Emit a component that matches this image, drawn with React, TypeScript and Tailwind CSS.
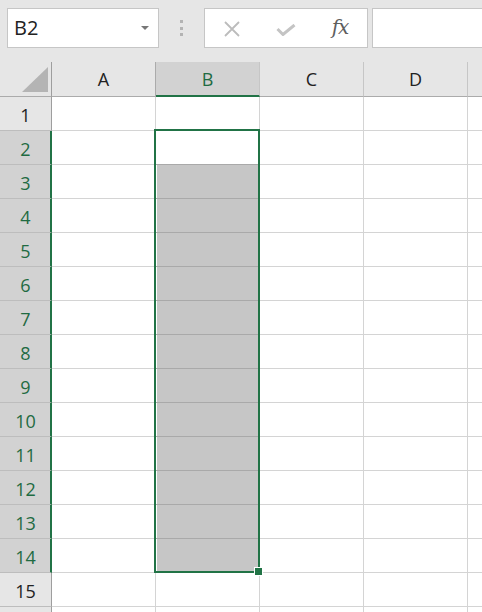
const GREEN = '#217346';

function XIcon() {
  return (
    <svg width="16" height="16" viewBox="0 0 16 16" fill="none">
      <path d="M1 1 L15 15 M15 1 L1 15" stroke="#bcbcbc" strokeWidth="1.8" />
    </svg>
  );
}

function CheckIcon() {
  return (
    <svg width="20" height="12" viewBox="0 0 20 12" fill="none">
      <path d="M1.5 5 L7 10.5 L18.5 1" stroke="#c4c4c4" strokeWidth="3" strokeLinejoin="miter" />
    </svg>
  );
}

export default function App() {
  const cols = ['A', 'B', 'C', 'D', 'E'];
  const rows = Array.from({ length: 16 }, (_, i) => i + 1);
  return (
    <div className="w-[482px] h-[612px] overflow-hidden bg-white font-['Open_Sans',sans-serif] text-[#262626]">
      {/* Formula bar */}
      <div className="h-[62px] bg-[#e6e6e6] flex items-start pt-[8px]">
        <div className="ml-[7px] w-[152px] h-[40px] border border-[#c6c6c6] bg-white flex items-center justify-between pl-[6px] pr-[9px]">
          <span className="text-[20px] leading-none text-[#222]">B2</span>
          <svg width="8" height="4" viewBox="0 0 8 4">
            <path d="M0 0 L8 0 L4 4 Z" fill="#777" />
          </svg>
        </div>
        <div className="w-[45px] h-[40px] flex flex-col items-center justify-center gap-[3.5px]">
          <div className="w-[3px] h-[3px] bg-[#b3b3b3]" />
          <div className="w-[3px] h-[3px] bg-[#b3b3b3]" />
          <div className="w-[3px] h-[3px] bg-[#b3b3b3]" />
        </div>
        <div className="w-[164px] h-[40px] border border-[#c6c6c6] bg-white flex items-center">
          <div className="w-[54px] flex justify-center pt-[1px]">
            <XIcon />
          </div>
          <div className="w-[54px] flex justify-center pt-[3px]">
            <CheckIcon />
          </div>
          <div className="w-[54px] flex justify-center">
            <span className="font-['DejaVu_Serif',serif] italic text-[20px] leading-none text-[#5e5e5e] pb-[2px] tracking-[-1px]">
              fx
            </span>
          </div>
        </div>
        <div className="ml-[4px] flex-1 -mr-[4px] h-[40px] border border-[#c6c6c6] bg-white" />
      </div>

      {/* Grid */}
      <div className="relative">
        <div className="grid grid-cols-[52px_repeat(5,104px)]">
          {/* Header row */}
          <div className="relative h-[35px] bg-[#e6e6e6] border-r border-b border-r-[#9e9e9e] border-b-[#ababab]">
            <svg className="absolute left-0 top-0" width="51" height="34" viewBox="0 0 51 34">
              <path d="M22 30 L48 30 L48 5 Z" fill="#b4b4b4" />
            </svg>
          </div>
          {cols.map((c) =>
            c === 'B' ? (
              <div
                key={c}
                className="h-[35px] bg-[#d2d2d2] border-r border-r-[#c6c6c6] border-b-2 border-b-[#217346] flex items-center justify-center text-[18px] text-[#1f6b42] pt-[1px]"
              >
                {c}
              </div>
            ) : (
              <div
                key={c}
                className={`h-[35px] bg-[#e6e6e6] border-r border-b border-b-[#ababab] flex items-center justify-center text-[18px] text-[#222] pt-[1px] ${
                  c === 'A' ? 'border-r-[#ababab]' : 'border-r-[#c6c6c6]'
                }`}
              >
                {c === 'E' ? '' : c}
              </div>
            )
          )}

          {/* Body rows */}
          {rows.map((r) => {
            const sel = r >= 2 && r <= 14;
            return [
              <div
                key={`h${r}`}
                className={
                  sel
                    ? 'h-[34px] bg-[#d2d2d2] border-r-2 border-r-[#217346] border-b border-b-[#bdbdbd] flex items-center justify-center text-[18px] text-[#1f6b42] pt-[3px] pl-[1px]'
                    : 'h-[34px] bg-[#e6e6e6] border-r border-r-[#9e9e9e] border-b border-b-[#bdbdbd] flex items-center justify-center text-[18px] text-[#222] pt-[3px]'
                }
              >
                {r <= 15 ? r : ''}
              </div>,
              ...cols.map((c) => {
                const gray = c === 'B' && r >= 3 && r <= 14;
                const darkBottom = c === 'B' && r >= 2 && r <= 13;
                return (
                  <div
                    key={`${c}${r}`}
                    className={`h-[34px] border-r border-b border-r-[#d4d4d4] ${
                      darkBottom ? 'border-b-[#a9a9a9]' : 'border-b-[#d4d4d4]'
                    } ${gray ? 'bg-[#c6c6c6] shadow-[inset_1px_0_0_#ffffff]' : 'bg-white'}`}
                  />
                );
              }),
            ];
          })}
        </div>

        {/* Selection overlay */}
        <div className="absolute left-[154px] top-[67px] w-[106px] h-[444px] border-2 border-[#217346] pointer-events-none" />
        {/* Fill handle */}
        <div className="absolute left-[254px] top-[505px] w-[9px] h-[9px] bg-[#217346] border border-white pointer-events-none" />
      </div>
    </div>
  );
}
